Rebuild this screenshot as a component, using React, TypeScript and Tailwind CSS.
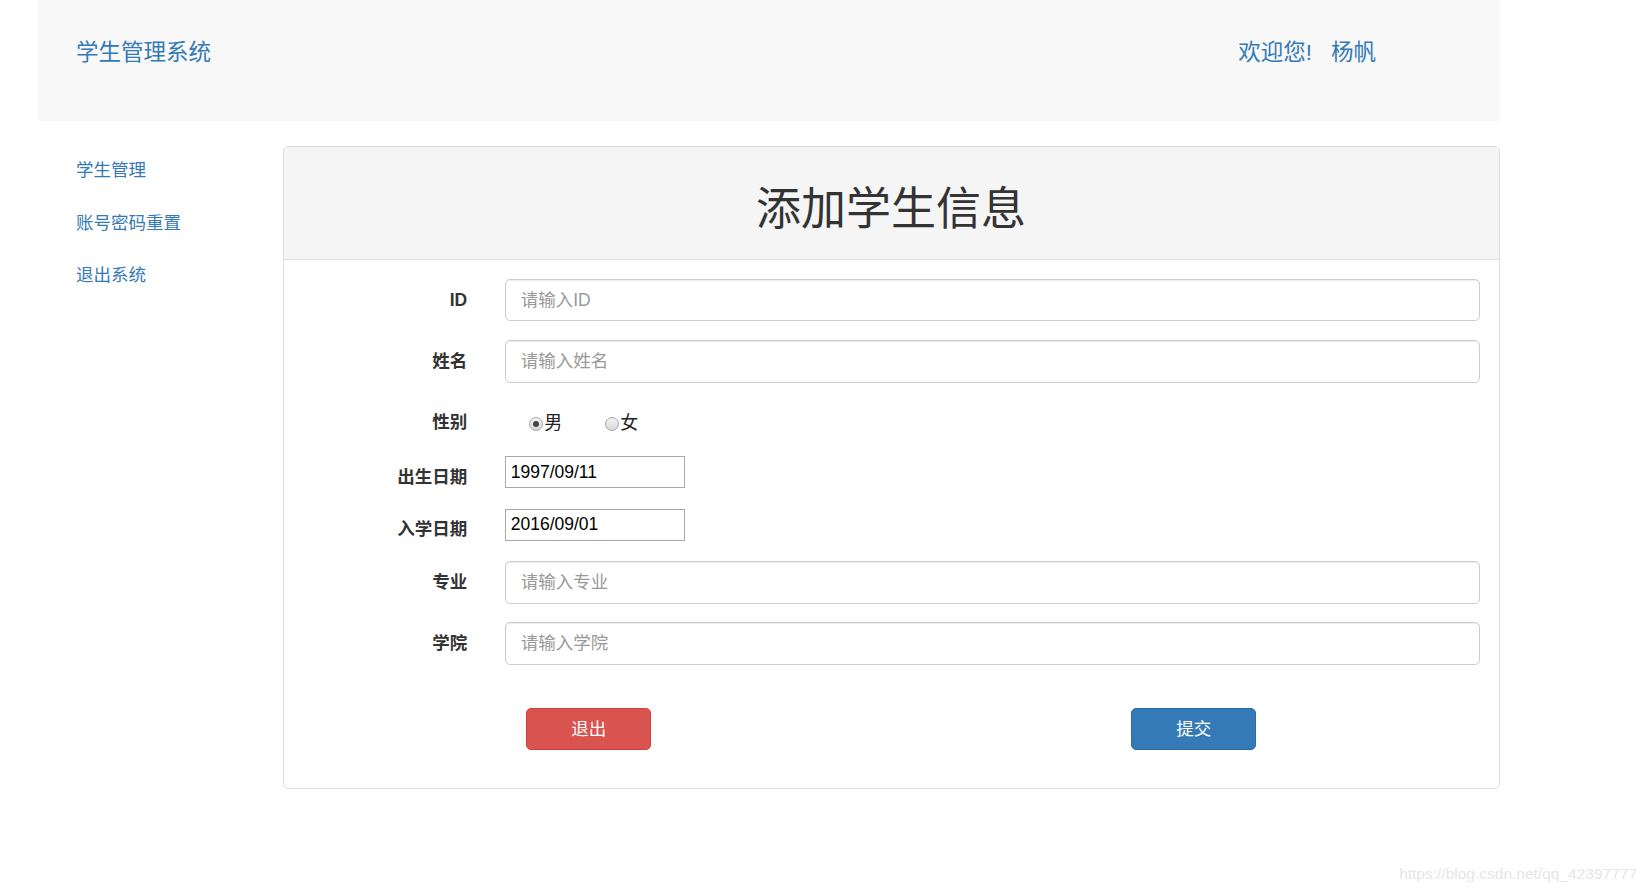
import React from 'react';

const cjk = "font-['Liberation_Sans','Noto_Sans_CJK_SC',sans-serif]";

function Radio({ checked, label }: { checked?: boolean; label: string }) {
  return (
    <span className="flex items-center">
      <span className="flex h-[14px] w-[14px] items-center justify-center rounded-full border border-[#a6a6a6] bg-gradient-to-b from-[#f4f4f4] to-[#d8d8d8]">
        {checked && <span className="h-[6px] w-[6px] rounded-full bg-[#444]" />}
      </span>
      <span className="ml-[1px] text-[18px] leading-[25px] text-[#222]">{label}</span>
    </span>
  );
}

function TextRow({ label, placeholder }: { label: string; placeholder: string }) {
  return (
    <div className="flex items-start">
      <label className="w-[165px] shrink-0 pt-[8.75px] text-right text-[17.5px] font-bold leading-[25px] text-[#333]">
        {label}
      </label>
      <div className="ml-[37.5px] flex-1">
        <input
          type="text"
          placeholder={placeholder}
          className={`${cjk} h-[42.5px] w-full rounded-[5px] border border-[#ccc] bg-white px-[15px] text-[17.5px] text-[#555] shadow-[inset_0_1px_1px_rgba(0,0,0,0.075)] outline-none placeholder:text-[#999]`}
        />
      </div>
    </div>
  );
}

function DateRow({ label, value }: { label: string; value: string }) {
  return (
    <div className="flex items-start">
      <label className="w-[165px] shrink-0 pt-[8.75px] text-right text-[17.5px] font-bold leading-[25px] text-[#333]">
        {label}
      </label>
      <div className="ml-[37.5px] flex-1">
        <input
          type="text"
          defaultValue={value}
          className={`${cjk} h-[32px] w-[180px] border border-[#a9a9a9] bg-white px-[5px] text-[17.5px] text-black outline-none`}
        />
      </div>
    </div>
  );
}

export default function App() {
  return (
    <div className={`${cjk} relative min-h-[892px] bg-white pl-[38px]`}>
      {/* Header */}
      <div className="flex h-[121px] w-[1462px] items-start justify-between bg-[#f8f8f8] pl-[38px] pr-[124px] pt-[40px]">
        <span className="text-[22.5px] leading-[26px] text-[#337ab7]">学生管理系统</span>
        <div className="flex gap-[19px] text-[22.5px] leading-[26px] text-[#337ab7]">
          <span>欢迎您!</span>
          <span>杨帆</span>
        </div>
      </div>

      <div className="mt-[25px] flex">
        {/* Sidebar */}
        <div className="flex w-[244.5px] shrink-0 flex-col gap-[26.5px] pl-[38px] pt-[11px] text-[17.5px] leading-[26px] text-[#337ab7]">
          <a>学生管理</a>
          <a>账号密码重置</a>
          <a>退出系统</a>
        </div>

        {/* Panel */}
        <div className="w-[1217px] self-start overflow-hidden rounded-[5px] border border-[#ddd] bg-white">
          <div className="border-b border-[#ddd] bg-[#f5f5f5] px-[18.75px] py-[12.5px]">
            <h1 className="mb-[12.5px] mt-[25px] text-center text-[45px] font-normal leading-[49.5px] text-[#333]">
              添加学生信息
            </h1>
          </div>
          <div className="flex flex-col gap-[18.75px] px-[18.75px] pb-[37.5px] pt-[18.75px]">
            <TextRow label="ID" placeholder="请输入ID" />
            <TextRow label="姓名" placeholder="请输入姓名" />
            <div className="flex items-start">
              <label className="w-[165px] shrink-0 pt-[8.75px] text-right text-[17.5px] font-bold leading-[25px] text-[#333]">
                性别
              </label>
              <div className="ml-[37.5px] flex flex-1 gap-[43px] pb-[1px] pl-[24.5px] pt-[10px]">
                <Radio checked label="男" />
                <Radio label="女" />
              </div>
            </div>
            <DateRow label="出生日期" value="1997/09/11" />
            <DateRow label="入学日期" value="2016/09/01" />
            <TextRow label="专业" placeholder="请输入专业" />
            <TextRow label="学院" placeholder="请输入学院" />
            <div className="mt-[24px] flex pl-[224px]">
              <button className="h-[42.5px] w-[125px] rounded-[5px] border border-[#d43f3a] bg-[#d9534f] text-[17.5px] text-white">
                退出
              </button>
              <button className="ml-[480px] h-[42.5px] w-[125px] rounded-[5px] border border-[#2e6da4] bg-[#337ab7] text-[17.5px] text-white">
                提交
              </button>
            </div>
          </div>
        </div>
      </div>

      <div className="absolute bottom-[8px] right-[10px] text-[15.5px] leading-[20px] text-[#e6e6e6]">
        https://blog.csdn.net/qq_42397777
      </div>
    </div>
  );
}
